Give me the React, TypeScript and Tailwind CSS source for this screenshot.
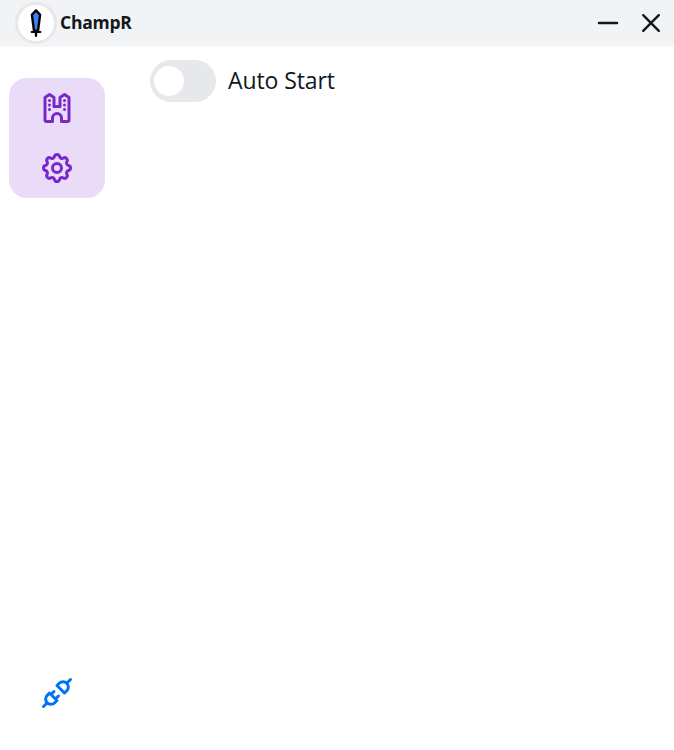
import React from "react";

const stroke = {
  fill: "none",
  stroke: "currentColor",
  strokeWidth: 2,
  strokeLinecap: "round" as const,
  strokeLinejoin: "round" as const,
};

function Sword() {
  return (
    <svg viewBox="0 0 32 32" className="h-8 w-8">
      <path d="M16 3.4l4.1 4.4-2.1 16h-4l-2.1-16z" fill="#3b82f6" stroke="#050505" strokeWidth="2.4" strokeLinejoin="round" />
      <path d="M11.5 25h9" stroke="#050505" strokeWidth="1.8" strokeLinecap="round" />
      <path d="M16 24v4.7" stroke="#050505" strokeWidth="2.4" strokeLinecap="round" />
    </svg>
  );
}

function Castle() {
  return (
    <svg viewBox="0 0 24 24" className="h-9 w-9" {...stroke}>
      <path d="M4 5l3-2 3 2v6h4V5l3-2 3 2v15a1 1 0 0 1-1 1h-4v-2.3a3 3 0 0 0-6 0V21H5a1 1 0 0 1-1-1z" />
      <path d="M7 7v.01M7 10v.01M7 13v.01M17 7v.01M17 10v.01M17 13v.01" />
    </svg>
  );
}

function Gear() {
  return (
    <svg viewBox="0 0 24 24" className="h-9 w-9" {...stroke}>
      <path d="M10.325 4.317c.426-1.756 2.924-1.756 3.35 0a1.724 1.724 0 0 0 2.573 1.066c1.543-.94 3.31.826 2.37 2.37a1.724 1.724 0 0 0 1.065 2.572c1.756.426 1.756 2.924 0 3.35a1.724 1.724 0 0 0-1.066 2.573c.94 1.543-.826 3.31-2.37 2.37a1.724 1.724 0 0 0-2.572 1.065c-.426 1.756-2.924 1.756-3.35 0a1.724 1.724 0 0 0-2.573-1.066c-1.543.94-3.31-.826-2.37-2.37a1.724 1.724 0 0 0-1.065-2.572c-1.756-.426-1.756-2.924 0-3.35a1.724 1.724 0 0 0 1.066-2.573c-.94-1.543.826-3.31 2.37-2.37 1 .608 2.296.07 2.572-1.065z" />
      <circle cx="12" cy="12" r="3" />
    </svg>
  );
}

function Plug() {
  return (
    <svg viewBox="0 0 24 24" className="h-9 w-9" {...stroke}>
      <path d="M7 12l5 5-1.5 1.5a3.536 3.536 0 1 1-5-5zM17 12l-5-5 1.5-1.5a3.536 3.536 0 1 1 5 5zM3 21l2.5-2.5M18.5 5.5L21 3M10 11l-2 2M13 14l-2 2" />
    </svg>
  );
}

export default function App() {
  return (
    <div className="flex h-[750px] w-full flex-col overflow-hidden bg-white font-['Open_Sans','Noto_Sans',sans-serif] text-[#11181c]">
      <header className="flex h-[47px] shrink-0 items-start border-b-2 border-[#f4f6f8] bg-[#f1f3f5] pl-[15px]">
        <div className="mt-0.5 flex h-[42px] w-[42px] items-center justify-center rounded-full border-[3px] border-[#e6e8eb] bg-white">
          <Sword />
        </div>
        <span className="ml-[3px] mt-[9px] text-[17.5px] font-bold leading-[26px] tracking-[-0.25px]">ChampR</span>
        <div className="ml-auto flex h-[46px] items-center">
          <button aria-label="Minimize" className="flex w-[43px] justify-center">
            <svg viewBox="0 0 24 24" className="h-6 w-6" fill="none" stroke="currentColor" strokeWidth="2.5" strokeLinecap="round">
              <path d="M3 12h18" />
            </svg>
          </button>
          <button aria-label="Close" className="mr-px flex w-[44px] justify-center">
            <svg viewBox="0 0 24 24" className="h-6 w-6" fill="none" stroke="currentColor" strokeWidth="2.4" strokeLinecap="round">
              <path d="M4.2 4.2l15.6 15.6M19.8 4.2L4.2 19.8" />
            </svg>
          </button>
        </div>
      </header>
      <div className="flex flex-1">
        <aside className="flex flex-col justify-between pb-[39px] pl-[9px] pt-[31px]">
          <nav className="flex h-[120px] w-24 flex-col items-center justify-between rounded-[18px] bg-[#eadcf8] py-3 text-[#7828c8]">
            <Castle />
            <Gear />
          </nav>
          <div className="flex justify-center text-[#0072f5]">
            <Plug />
          </div>
        </aside>
        <main className="pl-[45px] pt-[13px]">
          <label className="flex h-[42px] items-center">
            <span className="flex h-[42px] w-[66px] items-center rounded-full bg-[#e6e8eb] pl-1">
              <span className="h-[30px] w-[30px] rounded-full bg-white" />
            </span>
            <span className="-mt-0.5 ml-3 text-[23px] leading-8 tracking-[-0.1px]">Auto Start</span>
          </label>
        </main>
      </div>
    </div>
  );
}
